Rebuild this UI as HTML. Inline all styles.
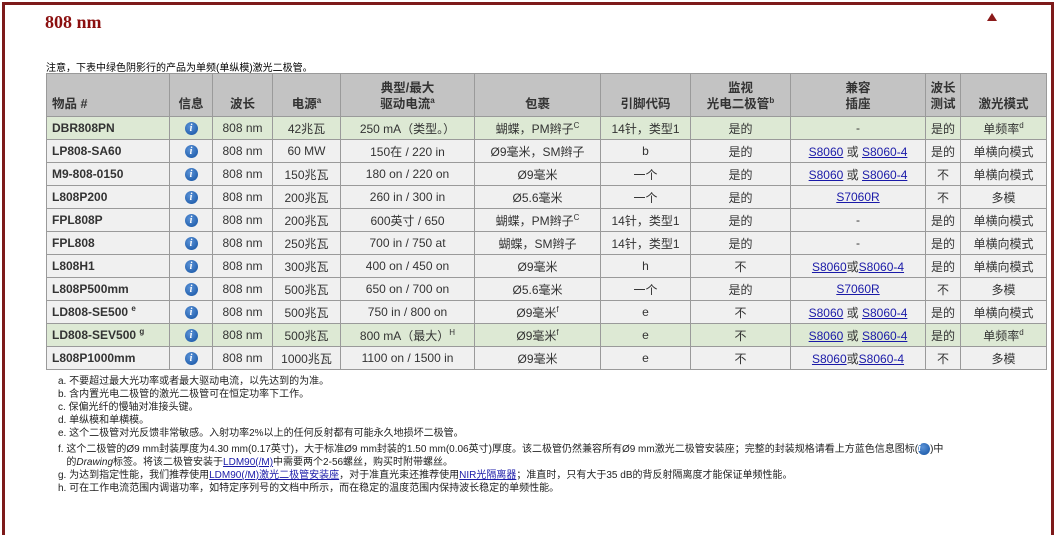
<!DOCTYPE html><html><head><meta charset="utf-8"><style>
body{margin:0;width:1063px;height:520px;background:#fff;font-family:"Liberation Sans","Noto Sans CJK SC",sans-serif;overflow:hidden;position:relative}
.frame{position:absolute;left:2px;top:2px;width:1046px;height:530px;border:3px solid #7d1a1a;border-bottom:none}
h1{position:absolute;left:45px;top:12px;margin:0;font:bold 18px "Liberation Serif","Noto Serif CJK SC",serif;color:#8b1010}
.tri{position:absolute;left:987px;top:13px;width:0;height:0;border-left:5px solid transparent;border-right:5px solid transparent;border-bottom:8px solid #8b1a1a}
.note{position:absolute;left:46px;top:59px;font-size:10px;color:#000}
table{position:absolute;left:46px;top:73px;width:1001px;border-collapse:collapse;font-size:12px;color:#333}
td,th{border:1px solid #9a9a9a;text-align:center;padding:0;height:22px}
th{background:#c3c3c3;height:38px;font-weight:bold;vertical-align:bottom;padding-bottom:4px;line-height:16px;font-size:12.5px}
th.l,td.l{text-align:left;padding-left:5px}
td.l{font-weight:bold}
tr.o td{background:#f0f0f0}
tr.g td{background:#dde9d4}
.i{display:inline-block;width:13px;height:13px;border-radius:50%;background:radial-gradient(circle at 40% 35%,#5b93d8,#1150a0);color:#fff;font:italic bold 10px "Liberation Serif",serif;line-height:13px;vertical-align:middle}
a{color:#1a1aa8;text-decoration:underline}
sup{font-size:8px;line-height:0}
.fn{position:absolute;left:58px;font-size:10px;color:#222;line-height:13px}
</style></head><body>
<div class="frame"></div>
<h1>808 nm</h1><div class="tri"></div>
<div class="note">注意，下表中绿色阴影行的产品为单频(单纵模)激光二极管。</div>
<table>
<colgroup><col style="width:123px"><col style="width:43px"><col style="width:60px"><col style="width:68px"><col style="width:134px"><col style="width:126px"><col style="width:90px"><col style="width:100px"><col style="width:135px"><col style="width:35px"><col></colgroup>
<tr><th class="l">物品 #</th><th>信息</th><th>波长</th><th>电源<sup>a</sup></th><th>典型/最大<br>驱动电流<sup>a</sup></th><th>包裹</th><th>引脚代码</th><th>监视<br>光电二极管<sup>b</sup></th><th>兼容<br>插座</th><th>波长<br>测试</th><th>激光模式</th></tr>
<tr class="g"><td class="l">DBR808PN</td><td><span class="i">i</span></td><td>808 nm</td><td>42兆瓦</td><td>250 mA（类型。）</td><td>蝴蝶，PM辫子<sup>C</sup></td><td>14针，类型1</td><td>是的</td><td>-</td><td>是的</td><td>单频率<sup>d</sup></td></tr>
<tr class="o"><td class="l">LP808-SA60</td><td><span class="i">i</span></td><td>808 nm</td><td>60 MW</td><td>150在 / 220 in</td><td>Ø9毫米，SM辫子</td><td>b</td><td>是的</td><td><a>S8060</a> 或 <a>S8060-4</a></td><td>是的</td><td>单横向模式</td></tr>
<tr class="o"><td class="l">M9-808-0150</td><td><span class="i">i</span></td><td>808 nm</td><td>150兆瓦</td><td>180 on / 220 on</td><td>Ø9毫米</td><td>一个</td><td>是的</td><td><a>S8060</a> 或 <a>S8060-4</a></td><td>不</td><td>单横向模式</td></tr>
<tr class="o"><td class="l">L808P200</td><td><span class="i">i</span></td><td>808 nm</td><td>200兆瓦</td><td>260 in / 300 in</td><td>Ø5.6毫米</td><td>一个</td><td>是的</td><td><a>S7060R</a></td><td>不</td><td>多模</td></tr>
<tr class="o"><td class="l">FPL808P</td><td><span class="i">i</span></td><td>808 nm</td><td>200兆瓦</td><td>600英寸 / 650</td><td>蝴蝶，PM辫子<sup>C</sup></td><td>14针，类型1</td><td>是的</td><td>-</td><td>是的</td><td>单横向模式</td></tr>
<tr class="o"><td class="l">FPL808</td><td><span class="i">i</span></td><td>808 nm</td><td>250兆瓦</td><td>700 in / 750 at</td><td>蝴蝶，SM辫子</td><td>14针，类型1</td><td>是的</td><td>-</td><td>是的</td><td>单横向模式</td></tr>
<tr class="o"><td class="l">L808H1</td><td><span class="i">i</span></td><td>808 nm</td><td>300兆瓦</td><td>400 on / 450 on</td><td>Ø9毫米</td><td>h</td><td>不</td><td><a>S8060</a>或<a>S8060-4</a></td><td>是的</td><td>单横向模式</td></tr>
<tr class="o"><td class="l">L808P500mm</td><td><span class="i">i</span></td><td>808 nm</td><td>500兆瓦</td><td>650 on / 700 on</td><td>Ø5.6毫米</td><td>一个</td><td>是的</td><td><a>S7060R</a></td><td>不</td><td>多模</td></tr>
<tr class="o"><td class="l">LD808-SE500 <sup>e</sup></td><td><span class="i">i</span></td><td>808 nm</td><td>500兆瓦</td><td>750 in / 800 on</td><td>Ø9毫米<sup>f</sup></td><td>e</td><td>不</td><td><a>S8060</a> 或 <a>S8060-4</a></td><td>是的</td><td>单横向模式</td></tr>
<tr class="g"><td class="l">LD808-SEV500 <sup>g</sup></td><td><span class="i">i</span></td><td>808 nm</td><td>500兆瓦</td><td>800 mA（最大）<sup>H</sup></td><td>Ø9毫米<sup>f</sup></td><td>e</td><td>不</td><td><a>S8060</a> 或 <a>S8060-4</a></td><td>是的</td><td>单频率<sup>d</sup></td></tr>
<tr class="o"><td class="l">L808P1000mm</td><td><span class="i">i</span></td><td>808 nm</td><td>1000兆瓦</td><td>1100 on / 1500 in</td><td>Ø9毫米</td><td>e</td><td>不</td><td><a>S8060</a>或<a>S8060-4</a></td><td>不</td><td>多模</td></tr>
</table>
<div class="fn" style="top:375px">a. 不要超过最大光功率或者最大驱动电流，以先达到的为准。<br>b. 含内置光电二极管的激光二极管可在恒定功率下工作。<br>c. 保偏光纤的慢轴对准接头键。<br>d. 单纵模和单横模。<br>e. 这个二极管对光反馈非常敏感。入射功率2%以上的任何反射都有可能永久地损坏二极管。</div>
<div class="fn" style="top:443px">f. 这个二极管的Ø9 mm封装厚度为4.30 mm(0.17英寸)，大于标准Ø9 mm封装的1.50 mm(0.06英寸)厚度。该二极管仍然兼容所有Ø9 mm激光二极管安装座；完整的封装规格请看上方蓝色信息图标(<span class="i" style="width:12px;height:12px;line-height:12px">i</span>)中<br>&nbsp;&nbsp;&nbsp;的<i>Drawing</i>标签。将该二极管安装于<a>LDM90(/M)</a>中需要两个2-56螺丝，购买时附带螺丝。<br>g. 为达到指定性能，我们推荐使用<a>LDM90(/M)激光二极管安装座</a>，对于准直光束还推荐使用<a>NIR光隔离器</a>；准直时，只有大于35 dB的背反射隔离度才能保证单频性能。<br>h. 可在工作电流范围内调谐功率，如特定序列号的文档中所示，而在稳定的温度范围内保持波长稳定的单频性能。</div>
</body></html>
